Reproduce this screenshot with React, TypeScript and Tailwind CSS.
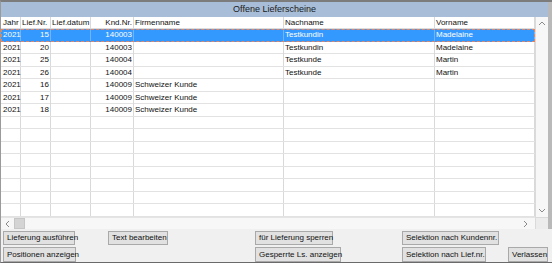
import React from "react";

const COLS = "grid grid-cols-[20px_30px_40px_43px_150px_151px_100px]";

type Row = { j: string; n: string; d: string; k: string; f: string; nn: string; v: string };

const data: Row[] = [
  { j: "2021", n: "15", d: "", k: "140003", f: "", nn: "Testkundin", v: "Madelaine" },
  { j: "2021", n: "20", d: "", k: "140003", f: "", nn: "Testkundin", v: "Madelaine" },
  { j: "2021", n: "25", d: "", k: "140004", f: "", nn: "Testkunde", v: "Martin" },
  { j: "2021", n: "26", d: "", k: "140004", f: "", nn: "Testkunde", v: "Martin" },
  { j: "2021", n: "16", d: "", k: "140009", f: "Schweizer Kunde", nn: "", v: "" },
  { j: "2021", n: "17", d: "", k: "140009", f: "Schweizer Kunde", nn: "", v: "" },
  { j: "2021", n: "18", d: "", k: "140009", f: "Schweizer Kunde", nn: "", v: "" },
];

const empty: Row = { j: "", n: "", d: "", k: "", f: "", nn: "", v: "" };
const rows: Row[] = [...data, ...Array.from({ length: 8 }, () => empty)];

function Chevron({ dir }: { dir: "up" | "down" | "left" | "right" }) {
  const paths: Record<string, string> = {
    up: "M1 5 L4 2 L7 5",
    down: "M1 2 L4 5 L7 2",
    left: "M5 1 L2 4 L5 7",
    right: "M2 1 L5 4 L2 7",
  };
  const w = dir === "up" || dir === "down" ? 8 : 7;
  const h = dir === "up" || dir === "down" ? 7 : 8;
  return (
    <svg width={w} height={h} viewBox={`0 0 ${w} ${h}`}>
      <path d={paths[dir]} fill="none" stroke="#8a8a8a" strokeWidth="1" />
    </svg>
  );
}

function Btn({ children, w, h }: { children: React.ReactNode; w: string; h: string }) {
  return (
    <div
      className={`${w} ${h} flex items-center border border-[#a9a9a9] bg-[#e1e1e1] pl-[3px] text-[8px] leading-none text-[#111] whitespace-nowrap`}
    >
      {children}
    </div>
  );
}

export default function App() {
  return (
    <div
      className="w-[552px] h-[263px] bg-[#f0f0f0] border-t-2 border-t-[#7c7c7c] border-l border-l-[#9a9a9a] border-b border-b-[#6a6a6a] flex flex-col overflow-hidden"
      style={{ fontFamily: '"Liberation Sans", Arial, sans-serif' }}
    >
      <div className="h-[15px] shrink-0 bg-[#a8bdd7] flex items-center justify-center text-[9px] text-[#1b1b1b] border-r-[4px] border-r-[#b9b9b9]">
        Offene Lieferscheine
      </div>
      <div className="flex h-[200px] shrink-0">
        <div className="w-[534px] bg-white flex flex-col">
          <div className={`${COLS} h-[12px] text-[8px] leading-[12px] text-[#111] border-b border-[#dcdcdc]`}>
            <div className="pl-[2px] border-r border-[#d9d9d9]">Jahr</div>
            <div className="pl-[1px] border-r border-[#d9d9d9] whitespace-nowrap">Lief.Nr.</div>
            <div className="pl-[1px] border-r border-[#d9d9d9] whitespace-nowrap">Lief.datum</div>
            <div className="pr-[1px] text-right border-r border-[#d9d9d9] whitespace-nowrap">Knd.Nr.</div>
            <div className="pl-[1px] border-r border-[#d9d9d9]">Firmenname</div>
            <div className="pl-[1px] border-r border-[#d9d9d9]">Nachname</div>
            <div className="pl-[1px] border-r border-[#d9d9d9]">Vorname</div>
          </div>
          {rows.map((r, i) => {
            const sel = i === 0;
            const line = sel ? "border-r border-[#6fb4ff]" : "border-r border-[#d9d9d9]";
            return (
              <div
                key={i}
                className={`${COLS} h-[12.5px] text-[8px] leading-[12px] border-b ${
                  sel
                    ? "bg-[#3399ff] text-white border-[#3399ff] outline-1 outline-dashed outline-[#e8855f] -outline-offset-1"
                    : "text-[#111] border-[#e2e2e2]"
                }`}
              >
                <div className={`pl-[2px] ${line}`}>{r.j}</div>
                <div className={`pr-[1px] text-right ${line}`}>{r.n}</div>
                <div className={line}>{r.d}</div>
                <div className={`pr-[1px] text-right ${line}`}>{r.k}</div>
                <div className={`pl-[1px] whitespace-nowrap ${line}`}>{r.f}</div>
                <div className={`pl-[1px] ${line}`}>{r.nn}</div>
                <div className={`pl-[1px] ${line}`}>{r.v}</div>
              </div>
            );
          })}
        </div>
        <div className="w-[13px] bg-[#f7f7f7] border-l border-[#dadada] flex flex-col justify-between items-center py-[3px]">
          <Chevron dir="up" />
          <Chevron dir="down" />
        </div>
        <div className="w-[4px] bg-[#b9b9b9]" />
      </div>
      <div className="flex h-[12px] shrink-0">
        <div className="w-[534px] bg-[#f7f7f7] flex items-center border-t border-[#e4e4e4]">
          <div className="w-[13px] flex justify-center">
            <Chevron dir="left" />
          </div>
          <div className="w-[11px] h-[11px] bg-[#d4d4d4] border border-[#c6c6c6]" />
          <div className="flex-1" />
          <div className="w-[12px] flex justify-center mr-[4px]">
            <Chevron dir="right" />
          </div>
        </div>
        <div className="w-[13px] bg-[#ececec] border-l border-t border-[#dadada]" />
        <div className="w-[4px] bg-[#b9b9b9]" />
      </div>
      <div className="flex-1 grid grid-cols-[105px_147px_147px_106px_auto] grid-rows-[16px_16px] pl-[2px] pt-[1px] content-start">
        <div className="flex items-center">
          <Btn w="w-[72px]" h="h-[14px]">Lieferung ausführen</Btn>
        </div>
        <div className="flex items-center">
          <Btn w="w-[60px]" h="h-[14px]">Text bearbeiten</Btn>
        </div>
        <div className="flex items-center">
          <Btn w="w-[78px]" h="h-[14px]">für Lieferung sperren</Btn>
        </div>
        <div className="flex items-center">
          <Btn w="w-[97px]" h="h-[14px]">Selektion nach Kundennr.</Btn>
        </div>
        <div />
        <div className="flex items-end">
          <Btn w="w-[73px]" h="h-[15px]">Positionen anzeigen</Btn>
        </div>
        <div />
        <div className="flex items-end">
          <Btn w="w-[86px]" h="h-[15px]">Gesperrte Ls. anzeigen</Btn>
        </div>
        <div className="flex items-end">
          <Btn w="w-[84px]" h="h-[15px]">Selektion nach Lief.nr.</Btn>
        </div>
        <div className="flex items-end">
          <Btn w="w-[40px]" h="h-[15px]">Verlassen</Btn>
        </div>
      </div>
    </div>
  );
}
